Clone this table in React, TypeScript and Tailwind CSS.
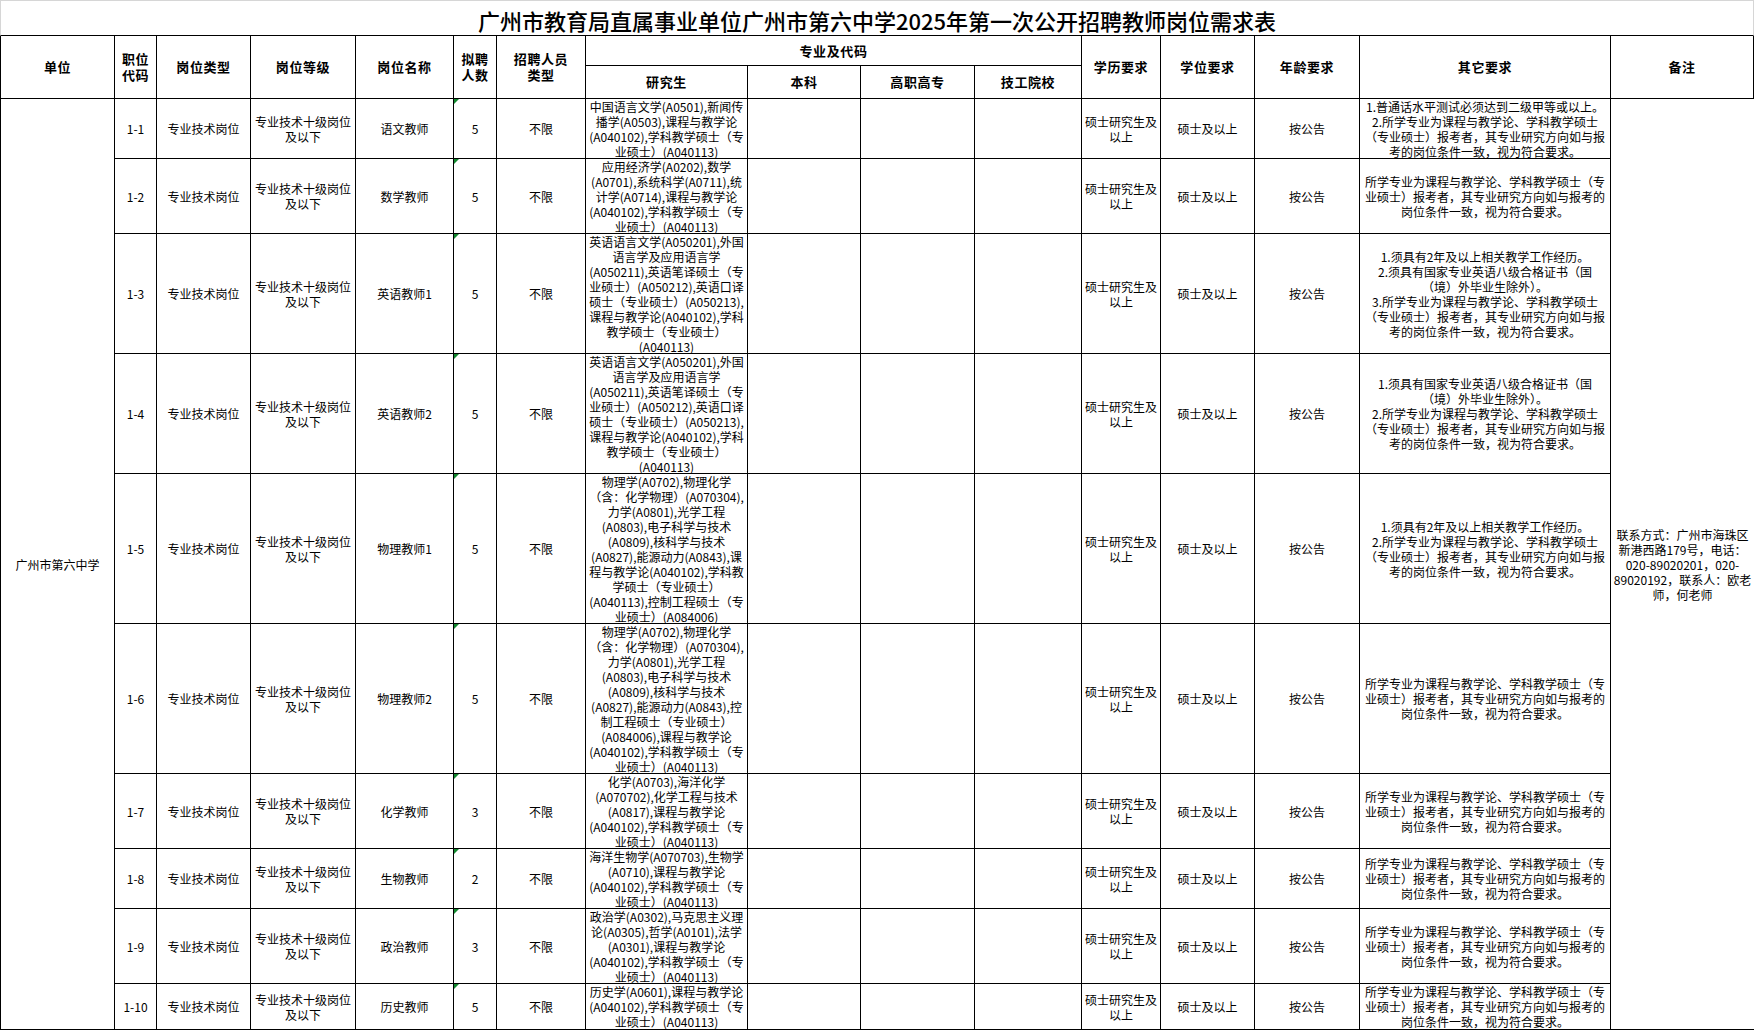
import { Fragment, type ReactNode } from "react";

type Post = {
  code: string;
  name: string;
  count: string;
  grad: string[];
  other: string[];
};

const sameOther = [
  "所学专业为课程与教学论、学科教学硕士（专",
  "业硕士）报考者，其专业研究方向如与报考的",
  "岗位条件一致，视为符合要求。",
];

const englishGrad = [
  "英语语言文学(A050201),外国",
  "语言学及应用语言学",
  "(A050211),英语笔译硕士（专",
  "业硕士）(A050212),英语口译",
  "硕士（专业硕士）(A050213),",
  "课程与教学论(A040102),学科",
  "教学硕士（专业硕士）",
  "(A040113)",
];

const posts: Post[] = [
  {
    code: "1-1",
    name: "语文教师",
    count: "5",
    grad: [
      "中国语言文学(A0501),新闻传",
      "播学(A0503),课程与教学论",
      "(A040102),学科教学硕士（专",
      "业硕士）(A040113)",
    ],
    other: [
      "1.普通话水平测试必须达到二级甲等或以上。",
      "2.所学专业为课程与教学论、学科教学硕士",
      "（专业硕士）报考者，其专业研究方向如与报",
      "考的岗位条件一致，视为符合要求。",
    ],
  },
  {
    code: "1-2",
    name: "数学教师",
    count: "5",
    grad: [
      "应用经济学(A0202),数学",
      "(A0701),系统科学(A0711),统",
      "计学(A0714),课程与教学论",
      "(A040102),学科教学硕士（专",
      "业硕士）(A040113)",
    ],
    other: sameOther,
  },
  {
    code: "1-3",
    name: "英语教师1",
    count: "5",
    grad: englishGrad,
    other: [
      "1.须具有2年及以上相关教学工作经历。",
      "2.须具有国家专业英语八级合格证书（国",
      "（境）外毕业生除外）。",
      "3.所学专业为课程与教学论、学科教学硕士",
      "（专业硕士）报考者，其专业研究方向如与报",
      "考的岗位条件一致，视为符合要求。",
    ],
  },
  {
    code: "1-4",
    name: "英语教师2",
    count: "5",
    grad: englishGrad,
    other: [
      "1.须具有国家专业英语八级合格证书（国",
      "（境）外毕业生除外）。",
      "2.所学专业为课程与教学论、学科教学硕士",
      "（专业硕士）报考者，其专业研究方向如与报",
      "考的岗位条件一致，视为符合要求。",
    ],
  },
  {
    code: "1-5",
    name: "物理教师1",
    count: "5",
    grad: [
      "物理学(A0702),物理化学",
      "（含：化学物理）(A070304),",
      "力学(A0801),光学工程",
      "(A0803),电子科学与技术",
      "(A0809),核科学与技术",
      "(A0827),能源动力(A0843),课",
      "程与教学论(A040102),学科教",
      "学硕士（专业硕士）",
      "(A040113),控制工程硕士（专",
      "业硕士）(A084006)",
    ],
    other: [
      "1.须具有2年及以上相关教学工作经历。",
      "2.所学专业为课程与教学论、学科教学硕士",
      "（专业硕士）报考者，其专业研究方向如与报",
      "考的岗位条件一致，视为符合要求。",
    ],
  },
  {
    code: "1-6",
    name: "物理教师2",
    count: "5",
    grad: [
      "物理学(A0702),物理化学",
      "（含：化学物理）(A070304),",
      "力学(A0801),光学工程",
      "(A0803),电子科学与技术",
      "(A0809),核科学与技术",
      "(A0827),能源动力(A0843),控",
      "制工程硕士（专业硕士）",
      "(A084006),课程与教学论",
      "(A040102),学科教学硕士（专",
      "业硕士）(A040113)",
    ],
    other: sameOther,
  },
  {
    code: "1-7",
    name: "化学教师",
    count: "3",
    grad: [
      "化学(A0703),海洋化学",
      "(A070702),化学工程与技术",
      "(A0817),课程与教学论",
      "(A040102),学科教学硕士（专",
      "业硕士）(A040113)",
    ],
    other: sameOther,
  },
  {
    code: "1-8",
    name: "生物教师",
    count: "2",
    grad: [
      "海洋生物学(A070703),生物学",
      "(A0710),课程与教学论",
      "(A040102),学科教学硕士（专",
      "业硕士）(A040113)",
    ],
    other: sameOther,
  },
  {
    code: "1-9",
    name: "政治教师",
    count: "3",
    grad: [
      "政治学(A0302),马克思主义理",
      "论(A0305),哲学(A0101),法学",
      "(A0301),课程与教学论",
      "(A040102),学科教学硕士（专",
      "业硕士）(A040113)",
    ],
    other: sameOther,
  },
  {
    code: "1-10",
    name: "历史教师",
    count: "5",
    grad: [
      "历史学(A0601),课程与教学论",
      "(A040102),学科教学硕士（专",
      "业硕士）(A040113)",
    ],
    other: sameOther,
  },
];

const Cell = ({ children, className = "" }: { children?: ReactNode; className?: string }) => (
  <div
    className={`flex items-center justify-center overflow-hidden border-r border-b border-black text-center ${className}`}
  >
    {children}
  </div>
);

const Head = ({ children, className = "" }: { children?: ReactNode; className?: string }) => (
  <Cell className={`text-[13px] leading-[16px] font-bold tracking-[0.6px] ${className}`}>{children}</Cell>
);

const Lines = ({ lines }: { lines: string[] }) => (
  <div className="flex flex-col items-center">
    {lines.map((l, i) => (
      <div key={i} className="whitespace-nowrap">
        {l}
      </div>
    ))}
  </div>
);

// little green "number stored as text" marker
const Marker = () => (
  <span className="absolute top-0 left-0 h-0 w-0 border-t-[5px] border-r-[5px] border-t-[#12892f] border-r-transparent" />
);

export default function App() {
  return (
    <div className="h-[1030px] w-[1754px] overflow-hidden bg-white font-['Noto_Sans_CJK_SC',sans-serif] text-[12px] leading-[15px] text-black">
      <div className="flex h-[36px] items-center justify-center border-t border-r border-l border-b border-t-[#d6d6d6] border-r-[#d6d6d6] border-l-[#d6d6d6] border-b-black pt-[3px]">
        <h1 className="text-[22px] leading-[26px] font-medium">
          广州市教育局直属事业单位广州市第六中学2025年第一次公开招聘教师岗位需求表
        </h1>
      </div>

      <div className="grid grid-cols-[114px_42px_94px_105px_98px_43px_89px_162px_113px_114px_107px_79px_94px_105px_251px_143px] grid-rows-[30px_33px_60px_75px_120px_120px_150px_150px_75px_60px_75px_46px] border-l border-black">
        <Head className="row-span-2">单位</Head>
        <Head className="row-span-2">
          <Lines lines={["职位", "代码"]} />
        </Head>
        <Head className="row-span-2">岗位类型</Head>
        <Head className="row-span-2">岗位等级</Head>
        <Head className="row-span-2">岗位名称</Head>
        <Head className="row-span-2">
          <Lines lines={["拟聘", "人数"]} />
        </Head>
        <Head className="row-span-2">
          <Lines lines={["招聘人员", "类型"]} />
        </Head>
        <Head className="col-span-4">专业及代码</Head>
        <Head className="row-span-2">学历要求</Head>
        <Head className="row-span-2">学位要求</Head>
        <Head className="row-span-2">年龄要求</Head>
        <Head className="row-span-2">其它要求</Head>
        <Head className="row-span-2">备注</Head>
        <Head>研究生</Head>
        <Head>本科</Head>
        <Head>高职高专</Head>
        <Head>技工院校</Head>

        <Cell className="col-[1/2] row-[3/span_10]">广州市第六中学</Cell>
        <Cell className="col-[16/17] row-[3/span_10] border-r-0">
          <Lines
            lines={[
              "联系方式：广州市海珠区",
              "新港西路179号，电话：",
              "020-89020201，020-",
              "89020192，联系人：欧老",
              "师，何老师",
            ]}
          />
        </Cell>

        {posts.map((p) => (
          <Fragment key={p.code}>
            <Cell>{p.code}</Cell>
            <Cell>专业技术岗位</Cell>
            <Cell>
              <Lines lines={["专业技术十级岗位", "及以下"]} />
            </Cell>
            <Cell>{p.name}</Cell>
            <Cell className="relative">
              <Marker />
              {p.count}
            </Cell>
            <Cell>不限</Cell>
            <Cell>
              <Lines lines={p.grad} />
            </Cell>
            <Cell />
            <Cell />
            <Cell />
            <Cell>
              <Lines lines={["硕士研究生及", "以上"]} />
            </Cell>
            <Cell>硕士及以上</Cell>
            <Cell>按公告</Cell>
            <Cell>
              <Lines lines={p.other} />
            </Cell>
          </Fragment>
        ))}
      </div>
    </div>
  );
}
